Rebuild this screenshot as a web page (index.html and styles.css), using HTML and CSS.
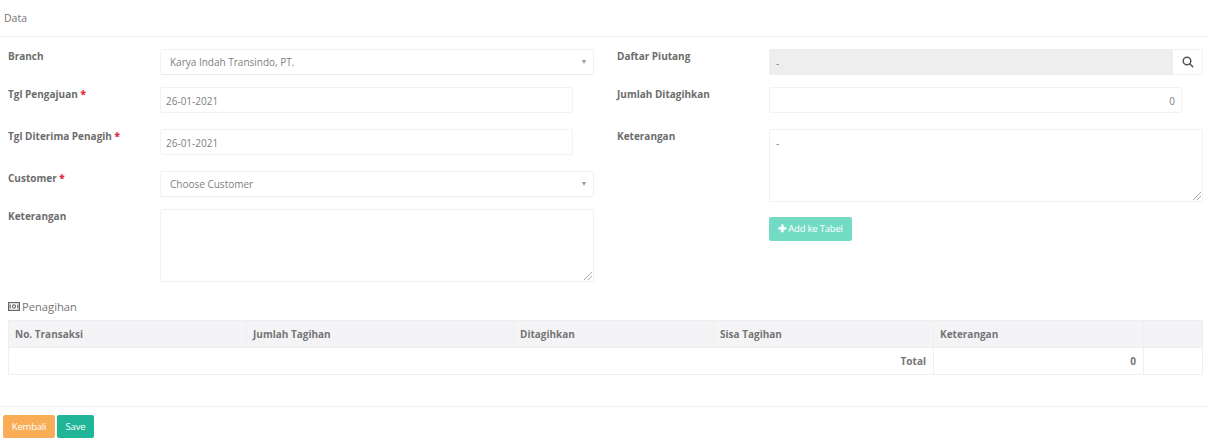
FILE: index.html
```html
<!DOCTYPE html>
<html lang="en">
<head>
    <meta charset="UTF-8">
    <meta name="viewport" content="width=device-width, initial-scale=1.0">
    <title>Data Penagihan</title>
    <link rel="stylesheet" href="styles.css">
</head>
<body>
    <div class="card-title">Data</div>

    <!-- Form Section -->
    <div class="form-grid">
        <div class="form-col">
            <div class="form-row gap-12">
                <label class="form-label">Branch</label>
                <div class="field select-field"><span>Karya Indah Transindo, PT.</span><i class="caret"></i></div>
            </div>
            <div class="form-row gap-16">
                <label class="form-label">Tgl Pengajuan <b class="req">*</b></label>
                <div class="field short-field">26-01-2021</div>
            </div>
            <div class="form-row gap-16">
                <label class="form-label">Tgl Diterima Penagih <b class="req">*</b></label>
                <div class="field short-field">26-01-2021</div>
            </div>
            <div class="form-row gap-12">
                <label class="form-label">Customer <b class="req">*</b></label>
                <div class="field select-field"><span>Choose Customer</span><i class="caret"></i></div>
            </div>
            <div class="form-row">
                <label class="form-label">Keterangan</label>
                <div class="field area-field"><i class="grip"></i></div>
            </div>
        </div>

        <div class="form-col">
            <div class="form-row gap-12">
                <label class="form-label">Daftar Piutang</label>
                <div class="input-group">
                    <div class="field disabled-field">-</div>
                    <div class="search-btn">
                        <svg width="12" height="12" viewBox="0 0 12 12" fill="none" stroke="#555" stroke-width="1.5">
                            <circle cx="5" cy="5" r="3.8"/>
                            <path d="M7.8 7.8L11.2 11.2"/>
                        </svg>
                    </div>
                </div>
            </div>
            <div class="form-row gap-16">
                <label class="form-label">Jumlah Ditagihkan</label>
                <div class="field short-field number-field">0</div>
            </div>
            <div class="form-row gap-15">
                <label class="form-label">Keterangan</label>
                <div class="field area-field area-filled">-<i class="grip"></i></div>
            </div>
            <div class="form-row">
                <span class="form-label"></span>
                <button class="btn btn-add"><b>✚</b> Add ke Tabel</button>
            </div>
        </div>
    </div>

    <!-- Penagihan Table -->
    <div class="section-title">
        <svg width="12" height="9" viewBox="0 0 12 9" fill="none" stroke="#666">
            <rect x="0.6" y="0.6" width="10.8" height="7.8" stroke-width="1.2"/>
            <circle cx="6" cy="4.5" r="1.6" stroke-width="1.1"/>
            <path d="M2.2 2.5V6.5M9.8 2.5V6.5" stroke-width="1.2"/>
        </svg>
        Penagihan
    </div>
    <table class="data-table">
        <thead>
            <tr>
                <th class="col-1">No. Transaksi</th>
                <th class="col-2">Jumlah Tagihan</th>
                <th class="col-3">Ditagihkan</th>
                <th class="col-4">Sisa Tagihan</th>
                <th class="col-5">Keterangan</th>
                <th></th>
            </tr>
        </thead>
        <tfoot>
            <tr>
                <td colspan="4">Total</td>
                <td>0</td>
                <td></td>
            </tr>
        </tfoot>
    </table>

    <div class="card-footer">
        <button class="btn btn-back">Kembali</button>
        <button class="btn btn-save">Save</button>
    </div>
</body>
</html>
```

FILE: styles.css
```css
body {
    margin: 0;
    font-family: "Open Sans", sans-serif;
    font-size: 10px;
    color: #757575;
    background-color: #fff;
    overflow: hidden;
}

.card-title {
    height: 36px;
    line-height: 36px;
    padding-left: 4px;
    font-size: 10.5px;
    border-bottom: 1px solid #f0f0f0;
}

.form-grid {
    display: flex;
    padding: 12px 5px 0 8px;
}

.form-col:first-child {
    width: 609px;
}

.form-col {
    width: 586px;
}

.form-row {
    display: flex;
    align-items: flex-start;
}

.gap-12 {
    margin-bottom: 12px;
}

.gap-15 {
    margin-bottom: 15px;
}

.gap-16 {
    margin-bottom: 16px;
}

.form-label {
    width: 152px;
    flex-shrink: 0;
    font-weight: 700;
    line-height: 14px;
    color: #6c6c6c;
}

.req {
    color: #e02b3c;
}

.field {
    box-sizing: border-box;
    height: 26px;
    line-height: 26px;
    border: 1px solid #f2f2f2;
    border-radius: 2px;
    padding: 0 9px;
    color: #808080;
}

.select-field {
    width: 434px;
    display: flex;
    justify-content: space-between;
    align-items: center;
    border-bottom-color: #eaeaea;
}

.caret {
    width: 0;
    height: 0;
    margin-right: -2px;
    border-left: 2.5px solid transparent;
    border-right: 2.5px solid transparent;
    border-top: 4px solid #999;
}

.short-field {
    width: 413px;
    padding-left: 5px;
}

.number-field {
    text-align: right;
    padding-right: 6px;
}

.area-field {
    position: relative;
    width: 434px;
    height: 73px;
    padding-left: 6px;
}

.grip {
    position: absolute;
    right: 1px;
    bottom: 1px;
    width: 9px;
    height: 9px;
    background: linear-gradient(135deg, transparent 50%, #aaa 50%, #aaa 57%, transparent 57%, transparent 75%, #aaa 75%, #aaa 82%, transparent 82%);
}

.input-group {
    display: flex;
    width: 434px;
}

.disabled-field {
    flex: 1;
    background-color: #eee;
    border-color: #eee;
    border-radius: 2px 0 0 2px;
    padding-left: 6px;
}

.search-btn {
    box-sizing: border-box;
    width: 30px;
    height: 26px;
    display: flex;
    align-items: center;
    justify-content: center;
    border: 1px solid #f2f2f2;
    border-left: 0;
}

.btn {
    border: 0;
    border-radius: 2px;
    height: 23px;
    padding: 0;
    font-family: "Open Sans", sans-serif;
    font-size: 9.5px;
    letter-spacing: -0.2px;
    color: #fff;
    cursor: pointer;
}

.btn-add {
    width: 83px;
    height: 24px;
    line-height: 22px;
    background-color: #73dbc4;
}

.section-title {
    display: flex;
    align-items: center;
    gap: 2px;
    height: 14px;
    margin: 17px 0 7px 8px;
    font-size: 11.2px;
}

.data-table {
    width: 1195px;
    margin-left: 8px;
    border-collapse: collapse;
    table-layout: fixed;
    font-size: 10px;
}

.data-table th,
.data-table td {
    box-sizing: border-box;
    height: 27px;
    padding: 0 7px 0 6px;
    border: 1px solid #efefef;
    font-weight: 700;
    color: #757575;
}

.data-table th {
    text-align: left;
    background-color: #f4f4f6;
}

.data-table td {
    text-align: right;
}

.col-1 {
    width: 238px;
}

.col-2 {
    width: 267px;
}

.col-3 {
    width: 200px;
}

.col-4 {
    width: 220px;
}

.col-5 {
    width: 210px;
}

.card-footer {
    display: flex;
    gap: 2px;
    margin-top: 31px;
    padding: 8px 0 0 3px;
    border-top: 1px solid #f0f0f0;
}

.btn-back {
    width: 52px;
    background-color: #f9ad57;
}

.btn-save {
    width: 37px;
    background-color: #1fb596;
}
```
